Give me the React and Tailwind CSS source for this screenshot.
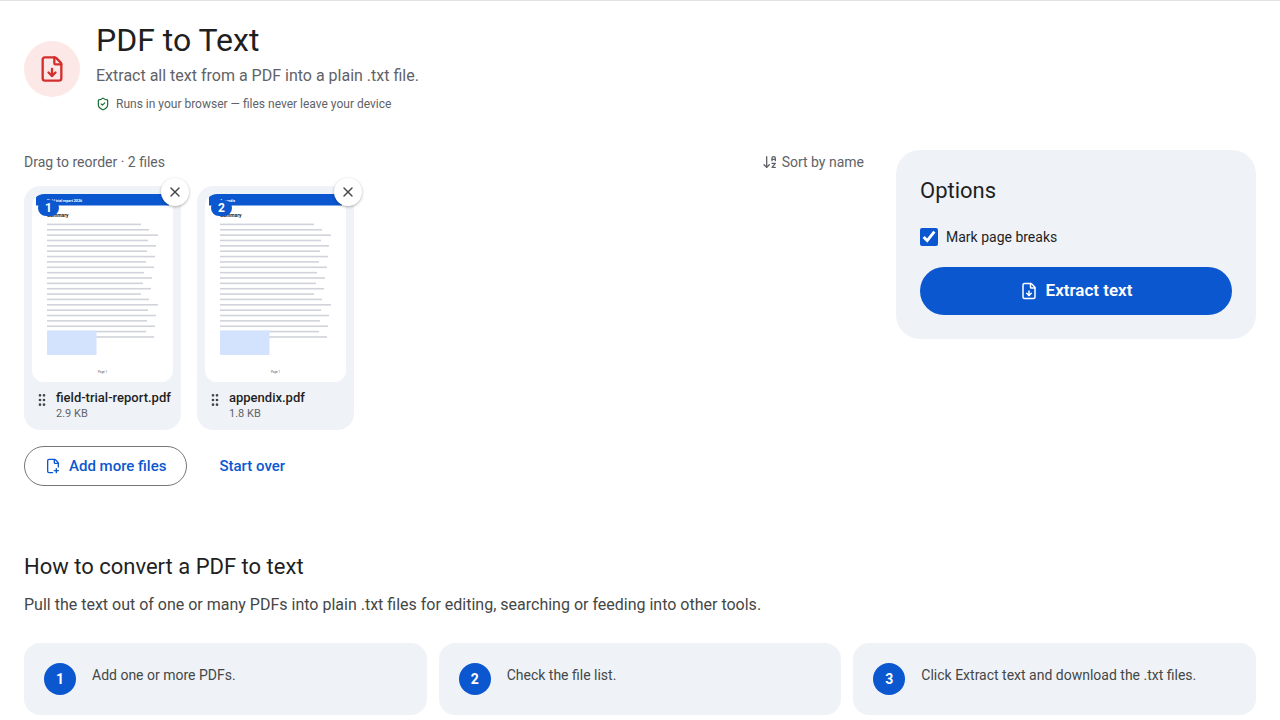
import { useState } from 'react';
import { ArrowDownAZ, FileDown, GripVertical, ShieldCheck, X } from 'lucide-react';

const initialFiles = [
  { id: 1, name: 'field-trial-report.pdf', size: '2.9 KB', title: 'Field trial report 2026' },
  { id: 2, name: 'appendix.pdf', size: '1.8 KB', title: 'Appendix' },
];

const steps = [
  'Add one or more PDFs.',
  'Check the file list.',
  'Click Extract text and download the .txt files.',
];

// Widths of the text lines on a page, repeated down the page
const lineWidths = [94, 102, 111, 101, 109, 100, 108, 99, 107, 97, 105, 96, 104];

const FilePlusIcon = ({ className }) => (
  <svg
    className={className}
    viewBox="0 0 24 24"
    fill="none"
    stroke="currentColor"
    strokeWidth="2"
    strokeLinecap="round"
    strokeLinejoin="round"
    aria-hidden="true"
  >
    <path d="M11.35 22H6a2 2 0 0 1-2-2V4a2 2 0 0 1 2-2h8a2.4 2.4 0 0 1 1.706.706l3.588 3.588A2.4 2.4 0 0 1 20 8v5.35" />
    <path d="M14 2v5a1 1 0 0 0 1 1h5" />
    <path d="M14 19h6" />
    <path d="M17 16v6" />
  </svg>
);

const PagePreview = ({ title }) => (
  <svg viewBox="0 0 133 188" className="h-full rounded-sm" role="img" aria-label={`First page of ${title}`}>
    <rect width="133" height="188" fill="#fff" />
    <rect width="133" height="11.5" fill="#0b57d0" />
    <text x="11" y="7.5" fontSize="3.6" fontWeight="700" fill="#fff">{title}</text>
    <text x="11" y="22.5" fontSize="5" fontWeight="700" fill="#1f1f1f">Summary</text>
    {Array.from({ length: 22 }, (_, i) => (
      <rect key={i} x="11" y={29.6 + i * 5.36} width={lineWidths[i % 13]} height="1.6" fill="#d0d3da" />
    ))}
    <rect x="11" y="136.5" width="49.5" height="24.5" fill="#d3e3fd" />
    <text x="66.5" y="179" fontSize="3" textAnchor="middle" fill="#5f6368">Page 1</text>
  </svg>
);

const FileCard = ({ file, index, onRemove }) => (
  <li className="relative w-[157px] rounded-2xl bg-[#eff3f8] p-2">
    <div className="relative flex aspect-3/4 justify-center overflow-hidden rounded-xl bg-white">
      <PagePreview title={file.title} />
      <span className="absolute left-[6px] top-[6px] rounded-full bg-[#0b57d0] px-[7px] text-xs leading-4 font-bold text-white">
        {index + 1}
      </span>
    </div>
    <button
      type="button"
      aria-label={`Remove ${file.name}`}
      onClick={() => onRemove(file.id)}
      className="absolute -right-2 -top-2 flex h-7 w-7 items-center justify-center rounded-full bg-white text-[#444746] shadow-[0_1px_3px_rgba(0,0,0,0.3)]"
    >
      <X className="h-4 w-4" />
    </button>
    <div className="flex items-start gap-[6px] pt-2">
      <GripVertical className="mt-[2px] ml-[2px] h-4 w-4 shrink-0 text-[#444746]" />
      <div className="whitespace-nowrap">
        <div className="text-[13px] leading-4 font-medium text-[#1f1f1f]">{file.name}</div>
        <div className="text-[11px] leading-4 text-[#5f6368]">{file.size}</div>
      </div>
    </div>
  </li>
);

const App = () => {
  const [files, setFiles] = useState(initialFiles);
  const [markBreaks, setMarkBreaks] = useState(true);

  const removeFile = (id) => setFiles(files.filter((f) => f.id !== id));
  const sortByName = () => setFiles([...files].sort((a, b) => a.name.localeCompare(b.name)));

  return (
    <div className="border-t border-[#e0e2e5] bg-white px-6 pb-1 font-['Roboto',sans-serif] text-[#1f1f1f]">
      {/* Header */}
      <header className="flex items-center gap-4 pt-[19px]">
        <div className="flex h-14 w-14 items-center justify-center rounded-full bg-[#fce8e6] text-[#d32f2f]">
          <FileDown className="h-7 w-7" />
        </div>
        <div className="pb-[2px]">
          <h1 className="text-[32px] leading-10">PDF to Text</h1>
          <p className="mt-1 text-base leading-6 text-[#5f6368]">Extract all text from a PDF into a plain .txt file.</p>
          <p className="mt-1 flex items-center gap-[6px] text-xs leading-6 text-[#5f6368]">
            <ShieldCheck className="h-[14px] w-[14px] text-[#146c2e]" />
            Runs in your browser — files never leave your device
          </p>
        </div>
      </header>

      <main>
        <div className="mt-8 grid grid-cols-[1fr_360px] items-start gap-8">
          {/* File list */}
          <section>
            <div className="flex items-center justify-between text-sm leading-6 text-[#5f6368]">
              <span>Drag to reorder · {files.length} files</span>
              <button type="button" onClick={sortByName} className="flex items-center gap-1">
                <ArrowDownAZ className="h-4 w-4" />
                Sort by name
              </button>
            </div>
            <ul className="mt-3 flex flex-wrap gap-4">
              {files.map((file, i) => (
                <FileCard key={file.id} file={file} index={i} onRemove={removeFile} />
              ))}
            </ul>
            <div className="mt-4 flex gap-2 text-[15px] font-medium text-[#0b57d0]">
              <button type="button" className="flex h-10 items-center gap-2 rounded-full border border-[#747775] px-5">
                <FilePlusIcon className="h-4 w-4" />
                Add more files
              </button>
              <button type="button" onClick={() => setFiles([])} className="h-10 rounded-full px-6">
                Start over
              </button>
            </div>
          </section>

          {/* Options */}
          <aside className="rounded-3xl bg-[#eff3f8] p-6">
            <h2 className="text-[22px] leading-[34px]">Options</h2>
            <label className="mt-[18px] flex items-center gap-2 text-sm leading-[22px]">
              <input
                type="checkbox"
                checked={markBreaks}
                onChange={(e) => setMarkBreaks(e.target.checked)}
                className="h-[18px] w-[18px] accent-[#0b57d0]"
              />
              Mark page breaks
            </label>
            <button
              type="button"
              className="mt-[19px] flex h-12 w-full items-center justify-center gap-2 rounded-full bg-[#0b57d0] text-[17px] font-semibold text-white"
            >
              <FileDown className="h-[18px] w-[18px]" />
              Extract text
            </button>
          </aside>
        </div>

        {/* How it works */}
        <section className="mt-16">
          <h2 className="text-[22px] leading-[34px]">How to convert a PDF to text</h2>
          <p className="mt-[9px] text-base leading-6 text-[#444746]">
            Pull the text out of one or many PDFs into plain .txt files for editing, searching or feeding into other tools.
          </p>
          <ol className="mt-[26px] grid grid-cols-3 gap-3">
            {steps.map((step, i) => (
              <li key={step} className="flex gap-4 rounded-2xl bg-[#eff3f8] p-5">
                <span className="flex h-8 w-8 shrink-0 items-center justify-center rounded-full bg-[#0b57d0] text-sm font-bold text-white">
                  {i + 1}
                </span>
                <p className="text-sm leading-6 text-[#444746]">{step}</p>
              </li>
            ))}
          </ol>
        </section>
      </main>
    </div>
  );
};

export default App;
